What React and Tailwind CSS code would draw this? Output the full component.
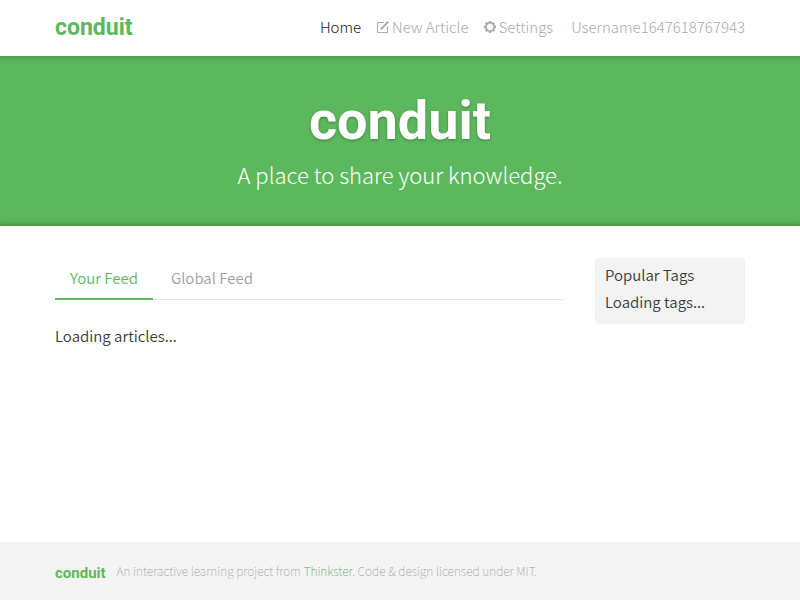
const LOGO = "font-['Roboto',sans-serif] font-bold";

function ComposeIcon() {
  return (
    <svg viewBox="0 0 13 13" className="h-[13px] w-[13px] shrink-0" fill="none" stroke="currentColor" aria-hidden="true">
      <path d="M8 1.5H1.5v10h10V5.5" />
      <path d="M4.8 8.4 12.2.8" strokeWidth="2" />
    </svg>
  );
}

function GearIcon() {
  const teeth = [0, 45, 90, 135, 180, 225, 270, 315];
  return (
    <svg viewBox="0 0 12 12" className="h-3 w-3 shrink-0" fill="none" stroke="currentColor" aria-hidden="true">
      <circle cx="6" cy="6" r="4.1" strokeWidth="1.8" />
      {teeth.map((angle) => (
        <path key={angle} d="M6 0v2" strokeWidth="2.4" transform={`rotate(${angle} 6 6)`} />
      ))}
    </svg>
  );
}

function Header() {
  return (
    <nav className="h-14">
      <div className="mx-auto flex h-full max-w-[720px] items-center justify-between px-[15px]">
        <a href="#home" className={`${LOGO} text-[23px] text-[#5cb85c]`}>conduit</a>
        <ul className="flex items-center gap-[15px] pb-[2px] font-light text-[#aaaaaa]">
          <li><a href="#home" className="text-[#222222]">Home</a></li>
          <li><a href="#editor" className="flex items-center gap-[3px]"><ComposeIcon />New Article</a></li>
          <li><a href="#settings" className="flex items-center gap-[3px]"><GearIcon />Settings</a></li>
          <li className="pl-[3px]"><a href="#profile">Username1647618767943</a></li>
        </ul>
      </div>
    </nav>
  );
}

function Banner() {
  return (
    <header className="bg-[#5cb85c] px-[15px] py-[34px] text-center text-white shadow-[inset_0_8px_8px_-8px_rgba(0,0,0,0.3),inset_0_-8px_8px_-8px_rgba(0,0,0,0.3)]">
      <h1 className={`${LOGO} pb-1 text-[54px] leading-[62px] [text-shadow:0_1px_3px_rgba(0,0,0,0.3)]`}>conduit</h1>
      <p className="text-[22px] leading-9 font-light">A place to share your knowledge.</p>
    </header>
  );
}

function Feed() {
  return (
    <section className="w-3/4 px-[15px]">
      <div className="flex border-b border-[#e5e5e5]">
        <button type="button" className="-mb-px h-[42px] border-b-2 border-[#5cb85c] px-[15px] text-[#5cb85c]">Your Feed</button>
        <button type="button" className="-mb-px h-[42px] border-b-2 border-transparent px-[18px] text-[#a0a0a0]">Global Feed</button>
      </div>
      <p className="py-6">Loading articles...</p>
    </section>
  );
}

function Sidebar() {
  return (
    <aside className="w-1/4 px-[15px]">
      <div className="rounded bg-[#f3f3f3] px-[10px] pt-1 pb-[9px]">
        <p className="mb-[1px] leading-[26px]">Popular Tags</p>
        <div className="leading-[26px]">Loading tags...</div>
      </div>
    </aside>
  );
}

function Footer() {
  return (
    <footer className="bg-[#f3f3f3]">
      <div className="mx-auto flex h-[58px] max-w-[720px] items-center gap-[11px] px-[15px]">
        <a href="#home" className={`${LOGO} pt-1 text-[15px] text-[#5cb85c]`}>conduit</a>
        <span className="text-[12px] font-thin text-[#999999]">
          An interactive learning project from <a href="#thinkster" className="text-[#4aa564]">Thinkster</a>. Code &amp; design licensed under MIT.
        </span>
      </div>
    </footer>
  );
}

export default function App() {
  return (
    <div className="flex min-h-screen flex-col bg-white font-['Noto_Sans_CJK_SC',sans-serif] text-[15px] leading-6 font-[350] text-[#373a3c]">
      <Header />
      <Banner />
      <main className="mx-auto mt-8 flex w-full max-w-[720px] grow items-start">
        <Feed />
        <Sidebar />
      </main>
      <Footer />
    </div>
  );
}
